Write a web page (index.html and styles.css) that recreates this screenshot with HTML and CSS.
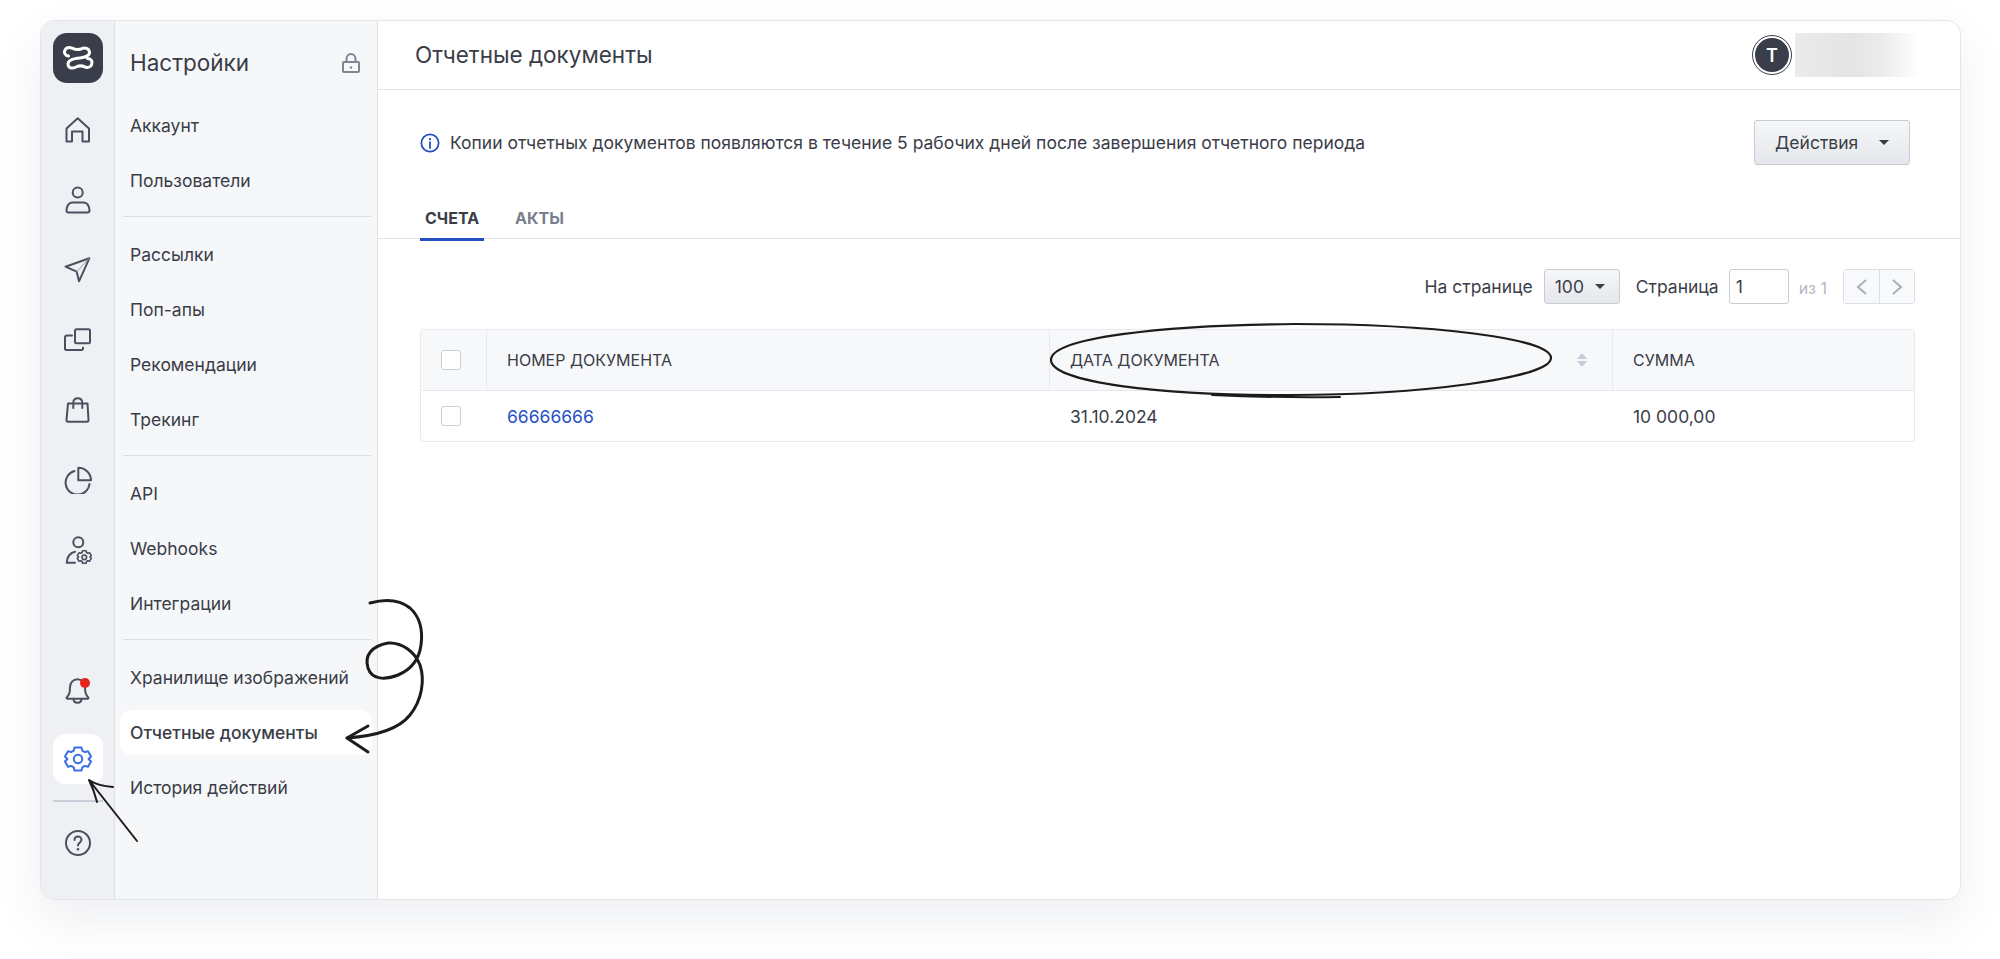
FILE: index.html
```html
<!DOCTYPE html>
<html lang="ru">
<head>
<meta charset="utf-8">
<title>Отчетные документы</title>
<link rel="stylesheet" href="styles.css">
</head>
<body>
<div class="app">
  <aside class="rail">
    <div class="logo">
      <svg width="50" height="50" viewBox="0 0 50 50" fill="none" stroke="#fff" stroke-width="3" stroke-linecap="round" stroke-linejoin="round"><path d="M15.500 23C12 22.500 10.500 19.500 12 17C13.500 14.500 16 14 18.500 15C22 16.500 24 17.500 28 16C32 14 36 15.500 36.500 19C37 22.500 32 24.500 27 25C21 25.500 15 27 15 31C15 35 19 36 23 34C26 32.500 29 32.500 32 34C36 35.500 39 33 39 29.500C39 27 37 25.500 34.500 25.500"/></svg>
    </div>
    <nav class="rail-nav">
      <div class="rail-item"><svg class="ic" viewBox="0 0 28 28"><path d="M2.500 25.500V12.500L13.700 2.300L25 12.500V25.500H18.500V15.500H8V25.500Z"/></svg></div>
      <div class="rail-item"><svg class="ic" viewBox="0 0 28 28"><circle cx="13.700" cy="6.500" r="5"/><path d="M8 16.500h12c3 0 5.500 3.500 5.500 8 0 1-.5 2-2 2H4.500c-1.500 0-2-1-2-2 0-4.500 2.500-8 5.500-8z"/></svg></div>
      <div class="rail-item"><svg class="ic" viewBox="0 0 28 28"><path d="M25.300 2.300L1.500 10.700l11.200 5L15 25.300z"/><path class="thin" d="M25 2.500L12.700 15.700"/></svg></div>
      <div class="rail-item"><svg class="ic" viewBox="0 0 28 28"><rect x="11" y="3.300" width="15" height="14" rx="1.500"/><path d="M8 9.500H3c-1 0-2 .5-2 2v11c0 1 .5 1.500 1.500 1.500H17c1 0 2-.5 2-1.500v-1"/></svg></div>
      <div class="rail-item"><svg class="ic" viewBox="0 0 28 28"><path d="M4 7.500h19.500l1 16.500c0 1-.5 1.700-1.500 1.700H4c-1 0-1.500-.7-1.500-1.700z"/><path d="M9.300 12V7c0-3 1.700-4.700 4.400-4.700S18.300 4 18.300 7v5"/></svg></div>
      <div class="rail-item"><svg class="ic" viewBox="0 0 28 28"><path d="M10.500 5A12 12 0 1 0 25.500 18"/><path d="M14.300 1.800c7 0 12.700 5.500 12.700 12.500H14.300z"/></svg></div>
      <div class="rail-item"><svg class="ic" viewBox="0 0 28 28"><circle cx="14.300" cy="6.300" r="5"/><path d="M11 15.700C6 17 3 21 2.700 26.700H11"/><circle class="small" cx="20.300" cy="21.300" r="2.300"/><path class="small" d="M18.500 14.800h3.600l.4 1.700 1.300.7 1.700-.5 1.800 3-1.300 1.300 1.300 1.300-1.800 3-1.700-.5-1.300.7-.4 1.700h-3.600l-.4-1.700-1.300-.7-1.700.5-1.800-3 1.300-1.300-1.300-1.300 1.800-3 1.700.5 1.300-.7z"/></svg></div>
    </nav>
    <div class="rail-bottom">
      <div class="rail-item"><svg class="ic" viewBox="0 0 28 28"><path d="M13.500 3.300c-4.500 0-7.500 3.500-7.500 8 0 6-1 7.500-3.500 10.500 0 .6.300 1 1 1h20c.7 0 1-.4 1-1-2.500-3-3.500-4.500-3.500-10.500 0-4.500-3-8-7.500-8z"/><path d="M9.500 22.800c0 2.500 1.800 4 4 4s4-1.500 4-4"/></svg><span class="dot"></span></div>
      <div class="rail-active"><svg class="ic gear" viewBox="0 0 28 28"><circle cx="14" cy="14" r="4.200"/><path d="M10.500 2.500h7l.8 3.200 2.500 1.400 3.200-.9 3 5.300-2.400 2.500 2.400 2.500-3 5.300-3.200-.9-2.500 1.400-.8 3.200h-7l-.8-3.200-2.500-1.400-3.200.9-3-5.300L3.400 14 1 11.500l3-5.300 3.200.9 2.500-1.400z"/></svg></div>
      <div class="rail-sep"></div>
      <div class="rail-item"><svg class="ic" viewBox="0 0 28 28"><circle cx="14" cy="14" r="12"/><path d="M10.500 11c0-2 1.500-3.500 3.500-3.500s3.500 1.500 3.500 3.300c0 2.700-3.500 2.700-3.500 5.700"/><circle class="fill" cx="14" cy="20.300" r="1.300"/></svg></div>
    </div>
  </aside>

  <aside class="side">
    <div class="side-head">
      <span class="side-title">Настройки</span>
      <svg class="lock" viewBox="0 0 18 20"><rect x="1" y="9" width="16" height="10" rx="1"/><path d="M4.500 9V6C4.500 3 6.500 1 9 1s4.500 2 4.500 5v3"/><circle class="lock-dot" cx="9" cy="14.500" r="1.200"/></svg>
    </div>
    <ul class="group">
      <li class="link">Аккаунт</li>
      <li class="link">Пользователи</li>
    </ul>
    <ul class="group">
      <li class="link">Рассылки</li>
      <li class="link">Поп-апы</li>
      <li class="link">Рекомендации</li>
      <li class="link">Трекинг</li>
    </ul>
    <ul class="group">
      <li class="link">API</li>
      <li class="link">Webhooks</li>
      <li class="link">Интеграции</li>
    </ul>
    <ul class="group">
      <li class="link">Хранилище изображений</li>
      <li class="link current">Отчетные документы</li>
      <li class="link">История действий</li>
    </ul>
  </aside>

  <main class="main">
    <header class="top">
      <h1 class="page-title">Отчетные документы</h1>
      <div class="user">
        <span class="avatar"><span class="avatar-in">T</span></span>
        <span class="blur-name"></span>
      </div>
    </header>
    <section class="notice">
      <div class="notice-text">
        <svg class="info" viewBox="0 0 22 22"><circle cx="11" cy="11" r="9.500"/><path d="M11 10v6.500"/><circle class="info-dot" cx="11" cy="6.700" r="1.300"/></svg>
        <span>Копии отчетных документов появляются в течение 5 рабочих дней после завершения отчетного периода</span>
      </div>
      <button class="btn actions">Действия<span class="caret"></span></button>
    </section>
    <div class="tabs">
      <span class="tab on">СЧЕТА</span>
      <span class="tab">АКТЫ</span>
    </div>
    <div class="pager">
      <span>На странице</span>
      <button class="btn size">100<span class="caret"></span></button>
      <span class="pg-label">Страница</span>
      <span class="pg-input">1</span>
      <span class="pg-of">из 1</span>
      <span class="pg-nav">
        <span class="pg-btn"><svg viewBox="0 0 14 18"><path d="M11 2L3 9l8 7"/></svg></span>
        <span class="pg-btn"><svg viewBox="0 0 14 18"><path d="M3 2l8 7-8 7"/></svg></span>
      </span>
    </div>
    <div class="table">
      <div class="row head">
        <div class="cell c-check"><span class="check"></span></div>
        <div class="cell c-num">НОМЕР ДОКУМЕНТА</div>
        <div class="cell c-date">ДАТА ДОКУМЕНТА<span class="sort"><i class="up"></i><i class="down"></i></span></div>
        <div class="cell c-sum">СУММА</div>
      </div>
      <div class="row body">
        <div class="cell c-check"><span class="check"></span></div>
        <div class="cell c-num"><a class="doc-link">66666666</a></div>
        <div class="cell c-date">31.10.2024</div>
        <div class="cell c-sum">10 000,00</div>
      </div>
    </div>
  </main>
</div>

<svg class="ink" width="2000" height="959" viewBox="0 0 2000 959" fill="none" stroke="#1c1c1c" stroke-linecap="round" stroke-linejoin="round">
  <path stroke-width="2.200" d="M1051 360C1051 338 1160 325 1295 324C1430 324 1551 338 1551 358C1551 378 1420 395 1290 395C1160 396 1051 382 1051 360"/>
  <path stroke-width="2" d="M1212 395Q1280 398 1340 397"/>
  <path stroke-width="3" d="M370 603C385 599 400 600 410 608C420 617 423 630 421 645C419 660 410 670 398 675C385 680 372 680 368 668C364 655 372 646 388 643C402 642 415 652 420 665C425 680 422 700 410 715C398 730 375 736 347 738"/>
  <path stroke-width="3" d="M368 726L347 738L368 752"/>
  <path stroke-width="2" d="M137 841L89 780M113 787Q98 786 89 780Q94 790 97 802"/>
</svg>
</body>
</html>
```
FILE: styles.css
```css
* { box-sizing: border-box; }
html, body { margin: 0; height: 100%; }
body {
  background: #fff;
  font-family: Inter, "Noto Sans", "Liberation Sans", sans-serif;
  color: #3a3d48;
  padding: 20px 39px 0 40px;
  overflow: hidden;
  position: relative;
}
ul { list-style: none; margin: 0; padding: 0; }
.app {
  display: flex;
  height: 880px;
  background: #fff;
  border: 1px solid #e3e5ea;
  border-radius: 14px;
  overflow: hidden;
  box-shadow: 0 20px 50px rgba(40, 50, 80, .08);
}
.rail {
  width: 74px;
  flex: none;
  background: #eef0f4;
  border-right: 1px solid #dfe1e7;
  display: flex;
  flex-direction: column;
  padding: 12px 0 0 12px;
}
.logo {
  width: 50px; height: 50px;
  border-radius: 14px;
  background: #3a3d4a;
}
.logo svg { display: block; }
.rail-nav { margin-top: 22px; display: flex; flex-direction: column; gap: 20px; flex: 1; }
.rail-item {
  width: 50px; height: 50px;
  display: flex; align-items: center; justify-content: center;
  position: relative;
}
.ic {
  width: 28px; height: 28px;
  fill: none; stroke: #4b5060; stroke-width: 2; stroke-linecap: round; stroke-linejoin: round;
}
.ic .fill { fill: #4b5060; stroke: none; }
.ic .thin { stroke-width: 1; stroke: #9a9eab; }
.ic .small { stroke-width: 1.600; }
.gear { stroke: #3a6ee8; }
.dot {
  position: absolute; right: 13px; top: 13px;
  width: 10px; height: 10px; border-radius: 50%;
  background: #e8231a;
}
.rail-bottom { display: flex; flex-direction: column; margin-bottom: 31px; }
.rail-active {
  width: 50px; height: 50px; margin-top: 19px;
  background: #fff; border-radius: 12px;
  display: flex; align-items: center; justify-content: center;
}
.rail-sep { width: 50px; height: 2px; background: #c9ced9; margin: 16px 0; }
.side {
  width: 263px;
  flex: none;
  background: #f6f7f9;
  border-right: 1px solid #e0e2e8;
  padding: 0 5px;
}
.side-head {
  height: 82px;
  padding: 1px 12px 0 10px;
  display: flex; align-items: center; justify-content: space-between;
}
.side-title { font-size: 22.500px; line-height: 30px; }
.lock { width: 18px; height: 20px; fill: none; stroke: #7f8594; stroke-width: 2; }
.lock-dot { fill: #7f8594; stroke: none; }
.group::after {
  content: "";
  display: block;
  height: 1px;
  margin: 13px 1px 15px 3px;
  background: #dcdee4;
}
.group:last-child::after { display: none; }
.link {
  height: 45px;
  margin-bottom: 10px;
  padding: 0 10px;
  border-radius: 12px;
  display: flex; align-items: center;
  font-size: 17.500px;
  white-space: nowrap;
}
.group .link:last-child { margin-bottom: 0; }
.current { background: #fff; font-weight: 500; }
.main { flex: 1; min-width: 0; display: flex; flex-direction: column; }
.top {
  height: 69px; flex: none;
  border-bottom: 1px solid #e3e5ea;
  display: flex; align-items: center; justify-content: space-between;
  padding: 0 40px 0 37px;
}
.page-title { margin: 0; font-size: 22.500px; font-weight: 400; line-height: 30px; color: #3a3d48; }
.user { display: flex; align-items: center; gap: 3px; }
.avatar {
  width: 40px; height: 40px; border-radius: 50%;
  border: 1px solid #3a3d4a;
  background: #fff;
  display: flex; align-items: center; justify-content: center;
}
.avatar-in {
  width: 34px; height: 34px; border-radius: 50%;
  background: #3a3d4a; color: #fff;
  display: flex; align-items: center; justify-content: center;
  font-size: 18px; font-weight: 600;
}
.blur-name {
  width: 125px; height: 44px;
  background: linear-gradient(90deg, #ebebeb 0%, #e4e4e4 45%, #ececec 70%, #fff 100%);
}
.notice {
  flex: none; height: 105px;
  display: flex; align-items: center; justify-content: space-between;
  padding: 0 50px 0 42px;
}
.notice-text { display: flex; align-items: center; gap: 10px; font-size: 17.500px; }
.info { width: 20px; height: 20px; fill: none; stroke: #2750c4; stroke-width: 2; stroke-linecap: round; }
.info-dot { fill: #2750c4; stroke: none; }
.btn {
  font: inherit; color: #3a3d48;
  background: linear-gradient(#f6f7f9, #e4e6eb);
  border: 1px solid #c8ccd5;
  border-radius: 3px;
  display: inline-flex; align-items: center;
}
.actions { width: 156px; height: 45px; padding: 0 20px; font-size: 17.500px; justify-content: space-between; }
.caret {
  display: inline-block; width: 0; height: 0;
  border-left: 5px solid transparent; border-right: 5px solid transparent;
  border-top: 5px solid #3a3d48;
}
.tabs {
  flex: none; height: 44px;
  border-bottom: 1px solid #e3e5ea;
  padding-left: 42px;
  display: flex;
  align-items: flex-start;
}
.tab {
  font-size: 16px; font-weight: 700; color: #7a7f8d;
  padding: 8px 5px 0; margin-right: 26px;
  height: 46px; line-height: 30px;
  border-bottom: 3px solid transparent;
}
.tab.on { color: #3a3d48; border-bottom-color: #2750c4; }
.pager {
  flex: none; margin-top: 30px; height: 35px;
  display: flex; align-items: center; justify-content: flex-end;
  padding-right: 45px;
  font-size: 17.500px;
}
.size { width: 76px; height: 35px; margin-left: 11px; padding: 0 14px 0 10px; justify-content: space-between; font-size: 17.500px; }
.pg-label { margin-left: 16px; }
.pg-input {
  width: 60px; height: 35px; margin-left: 10px;
  border: 1px solid #c8ccd5; border-radius: 3px;
  padding-left: 6px; line-height: 33px;
}
.pg-of { margin: 2px 0 0 10px; color: #b3b8c4; font-size: 16px; }
.pg-nav { display: flex; margin-left: 16px; border: 1px solid #dcdfe5; border-radius: 3px; height: 35px; }
.pg-btn { width: 35px; display: flex; align-items: center; justify-content: center; background: #f8f9fa; }
.pg-btn + .pg-btn { border-left: 1px solid #dcdfe5; }
.pg-btn svg { width: 14px; height: 18px; fill: none; stroke: #a8aebb; stroke-width: 2; }
.table {
  margin: 25px 45px 0 42px;
  border: 1px solid #e8eaee;
  border-radius: 3px;
  font-size: 17.500px;
}
.row { display: flex; }
.head { height: 61px; background: #f7f8fa; border-bottom: 1px solid #e6e8ec; font-size: 16px; }
.body { height: 50px; }
.cell { display: flex; align-items: center; padding: 0 20px; }
.c-check { width: 66px; flex: none; }
.c-num { width: 563px; flex: none; }
.c-date { width: 563px; flex: none; justify-content: space-between; padding-right: 25px; }
.c-sum { flex: 1; }
.head .c-check, .head .c-num, .head .c-date { border-right: 1px solid #e8eaee; }
.check { width: 20px; height: 20px; background: #fff; border: 1px solid #c9cdd6; border-radius: 3px; }
.doc-link { color: #2750c4; }
.sort { display: flex; flex-direction: column; gap: 2px; }
.sort i { display: block; width: 0; height: 0; border-left: 5px solid transparent; border-right: 5px solid transparent; }
.sort .up { border-bottom: 6px solid #c5cad6; }
.sort .down { border-top: 6px solid #c5cad6; }
.ink { position: absolute; left: 0; top: 0; pointer-events: none; }
```
